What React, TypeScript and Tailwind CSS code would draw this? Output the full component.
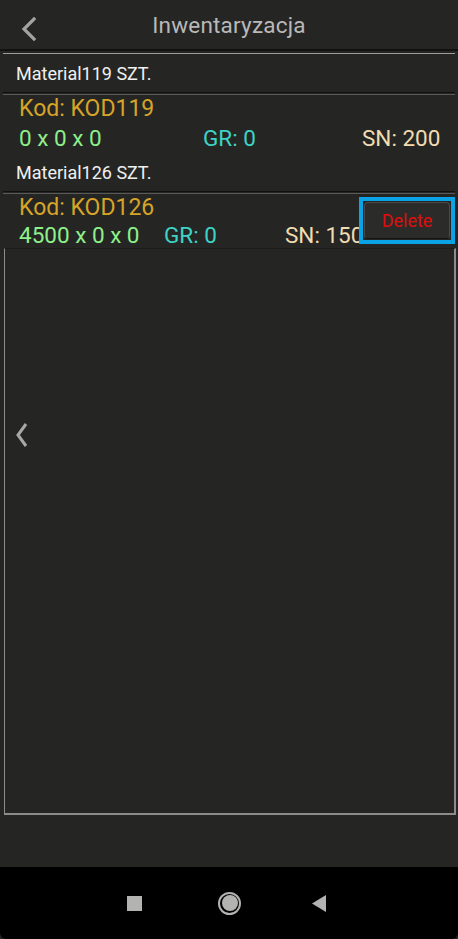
import React from "react";

export default function App() {
  return (
    <div
      className="w-[458px] h-[939px] bg-[#252624] flex flex-col overflow-hidden"
      style={{ fontFamily: "Roboto, 'Noto Sans', sans-serif" }}
    >
      {/* Header */}
      <div className="h-[49px] relative flex items-center justify-center shrink-0">
        <svg className="absolute left-[20px] top-[16px]" width="18" height="26" viewBox="0 0 18 26">
          <polyline points="14,3 4,13 14,23" fill="none" stroke="#a3a3a3" strokeWidth="3.2" strokeLinecap="square" />
        </svg>
        <span className="text-[22.5px] text-[#b9b9b9] tracking-[0.2px] mt-[2px]">Inwentaryzacja</span>
      </div>
      <div className="h-[2px] bg-[#121311] shrink-0" />
      <div className="h-[2px] shrink-0" />
      <div className="h-[1px] bg-[#9c9c9a] mx-[3px] shrink-0" />

      {/* Item 1 */}
      <div className="h-[38px] flex items-center pl-[16px] shrink-0">
        <span className="text-[18px] text-[#f0f0f0]">Material119 SZT.</span>
      </div>
      <div className="h-[1px] bg-[#111210] mx-[3px] shrink-0" />
      <div className="h-[1px] shrink-0" />
      <div className="h-[1px] bg-[#5a5b59] mx-[3px] shrink-0" />
      <div className="h-[29px] flex items-center pl-[19px] shrink-0">
        <span className="text-[23px] text-[#d6a428]">Kod: KOD119</span>
      </div>
      <div className="h-[29px] flex items-center pl-[19px] shrink-0 text-[22.5px] whitespace-nowrap">
        <span className="w-[184px] shrink-0 text-[#8ef08a]">0 x 0 x 0</span>
        <span className="w-[159px] shrink-0 text-[#3ed3c6]">GR: 0</span>
        <span className="shrink-0 text-[#f1dcb1]">SN: 200</span>
      </div>

      {/* Item 2 */}
      <div className="h-[38px] flex items-center pl-[16px] shrink-0">
        <span className="text-[18px] text-[#f0f0f0]">Material126 SZT.</span>
      </div>
      <div className="h-[1px] bg-[#111210] mx-[3px] shrink-0" />
      <div className="h-[1px] shrink-0" />
      <div className="h-[1px] bg-[#5a5b59] mx-[3px] shrink-0" />
      <div className="relative shrink-0 h-[54px]">
        <div className="h-[28px] flex items-center pl-[19px]">
          <span className="text-[23px] text-[#d6a428]">Kod: KOD126</span>
        </div>
        <div className="h-[28px] flex items-center pl-[19px] text-[22.5px] whitespace-nowrap">
          <span className="w-[145px] shrink-0 text-[#8ef08a]">4500 x 0 x 0</span>
          <span className="w-[121px] shrink-0 text-[#3ed3c6]">GR: 0</span>
          <span className="shrink-0 text-[#f1dcb1]">SN: 150</span>
        </div>
        <div className="absolute left-[359px] top-[3px] w-[96px] h-[47px] border-[4px] border-[#0ba3e6] bg-[#252624] flex items-center justify-center">
          <div className="w-[86px] h-[37px] rounded-[4px] bg-[#2b2c2a] border border-[#4a4b49] border-b-[#151614] flex items-center justify-center">
            <span className="text-[18px] text-[#e00c0c]">Delete</span>
          </div>
        </div>
      </div>

      {/* Box */}
      <div className="flex-1 flex flex-col">
        <div className="h-[567px] ml-[4px] mr-[2px] border-l border-r-2 border-b-2 border-[#8c8c8a] border-t border-t-[#1c1d1b] flex flex-col items-start pt-[173px]">
          <svg className="ml-[10px]" width="14" height="26" viewBox="0 0 14 26">
            <polyline points="11,2 3,13 11,24" fill="none" stroke="#a8a8a8" strokeWidth="3" />
          </svg>
        </div>
        <div className="flex-1" />
      </div>

      {/* Nav bar */}
      <div className="h-[72px] bg-black shrink-0 flex items-center rounded-b-[6px]">
        <div className="ml-[127px] w-[15px] h-[15px] bg-[#b3b4b2]" />
        <div className="ml-[76px] w-[23px] h-[23px] rounded-full border-[2px] border-[#b3b4b2] flex items-center justify-center">
          <div className="w-[16px] h-[16px] rounded-full bg-[#b3b4b2]" />
        </div>
        <svg className="ml-[71px]" width="15" height="17" viewBox="0 0 15 17">
          <polygon points="14,0 14,17 0,8.5" fill="#b3b4b2" />
        </svg>
      </div>
    </div>
  );
}
